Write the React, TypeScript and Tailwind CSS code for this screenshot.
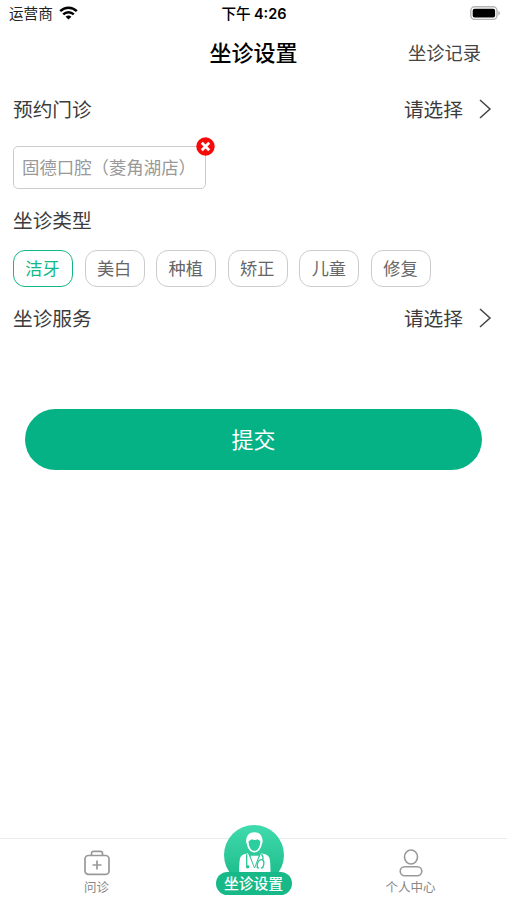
import React, { useState } from 'react';

const visitTypes = ['洁牙', '美白', '种植', '矫正', '儿童', '修复'];

const WifiIcon = () => (
  <svg width="19" height="14" viewBox="0 0 19 14" className="ml-[6px] -mt-px" fill="none" stroke="#000" strokeWidth="2.5">
    <path d="M1.2 5.2C6 .5 13 .5 17.8 5.2" />
    <path d="M4.2 8.3c3-2.900 7.600-2.900 10.600 0" />
    <path d="M9.5 13.600 6.600 10.700c1.700-1.600 4.100-1.600 5.800 0z" fill="#000" stroke="none" />
  </svg>
);

const BatteryIcon = () => (
  <svg width="31" height="14" viewBox="0 0 31 14" className="-mt-[2px]">
    <rect x="0.8" y="0.8" width="26.2" height="12.6" rx="3.8" fill="#fff" stroke="#b4b4b4" strokeWidth="1.4" />
    <rect x="2.7" y="2.7" width="22.4" height="8.8" rx="2" fill="#000" />
    <path d="M28.4 5v4.4c1.9-.6 1.9-3.8 0-4.4z" fill="#aaa" />
  </svg>
);

const ChevronIcon = () => (
  <svg width="13" height="20" viewBox="0 0 13 20" className="ml-4" fill="none" stroke="#444" strokeWidth="1.5">
    <path d="M1 1l10 9L1 19" />
  </svg>
);

const CloseIcon = () => (
  <svg width="19" height="19" viewBox="0 0 19 19">
    <circle cx="9.5" cy="9.5" r="9.2" fill="#f60a0a" />
    <path d="M5.800 5.800l7.400 7.400M13.200 5.800l-7.400 7.400" stroke="#fff" strokeWidth="2.8" />
  </svg>
);

const MedicalKitIcon = () => (
  <svg width="26" height="26" viewBox="0 0 26 26" fill="none" stroke="#999" strokeWidth="1.7">
    <rect x="1" y="5.5" width="24" height="18.800" rx="3.4" />
    <path d="M7.500 5.500V3.400C7.500 2.200 8.300 1.400 9.500 1.400h7c1.200 0 2 .8 2 2v2.100" />
    <path d="M13 10.500v9M8.500 15h9" />
  </svg>
);

const UserIcon = () => (
  <svg width="24" height="28" viewBox="0 0 24 28" fill="none" stroke="#999" strokeWidth="1.6">
    <ellipse cx="12" cy="8" rx="6.5" ry="7" />
    <rect x="1.2" y="17.8" width="21.6" height="9" rx="4.5" />
  </svg>
);

const DoctorIcon = () => (
  <svg width="60" height="60" viewBox="0 0 60 60">
    <path
      d="M22.200 15.500c0-5 3.200-8.300 8.200-8.300s8.100 3.300 8.100 8.300c.3.800.3 2.200-.5 3.100-1 5.400-3.700 9-7.600 9s-6.700-3.600-7.700-9c-.8-.9-.8-2.300-.5-3.100z"
      fill="#fff"
    />
    <path
      d="M24.600 15.900c1.300-.2 2.200-.8 2.900-1.700 2.400.9 4.600.9 6.200 0 .7.900 1.600 1.500 2.600 1.700-.1 5.700-2.200 9.900-5.900 9.900s-5.700-4.200-5.800-9.900z"
      fill="#2bce9e"
    />
    <path
      d="M24 28.300c-5 1-7.300 2.400-8 5.300-.7 3.200-.9 8.400-.9 14.400h31.400c0-6-.2-11.200-.9-14.400-.7-2.900-3.200-4.300-8.600-5.300l-6.500 14z"
      fill="#fff"
    />
    <path d="M26.200 30.800h8.600L30.600 44z" fill="#fff" />
    <g fill="none" stroke="#26c596">
      <path d="M25 28.600 30.500 43l5.800-14.400" strokeWidth="0.9" />
      <path d="M22.700 29.300v11.200" strokeWidth="1.3" />
      <path d="M37.300 29.300c1.900 2 2.100 3.900 1.200 5.500" strokeWidth="1.3" />
      <path d="M33.500 42.800c-1.100-3.900.9-8.200 3.800-8.200 3.100 0 3.400 4.600 1.200 8.200" strokeWidth="1.3" />
    </g>
    <circle cx="23.600" cy="41.700" r="1.800" fill="#26c596" />
    <path d="M32.900 42l1.800 1.400M39 42l-1.800 1.400" stroke="#26c596" strokeWidth="1.4" />
  </svg>
);

interface SelectRowProps {
  label: string;
}

const SelectRow: React.FC<SelectRowProps> = ({ label }) => (
  <div className="flex h-10 items-center justify-between pl-[13px] pr-[15px] text-[19.7px] text-[#3c3c3c]">
    <span>{label}</span>
    <button className="flex items-center">
      请选择
      <ChevronIcon />
    </button>
  </div>
);

const App: React.FC = () => {
  const [selectedType, setSelectedType] = useState('洁牙');
  const [clinic, setClinic] = useState('固德口腔（菱角湖店）');

  return (
    <div className="flex h-[900px] w-[507px] flex-col bg-white font-['Noto_Sans_CJK_SC',sans-serif] whitespace-nowrap">
      {/* Status bar */}
      <div className="grid h-[27px] grid-cols-3 items-center pl-[9px] pr-[6px] text-[14.6px] leading-none text-[#222]">
        <div className="flex items-center">
          运营商
          <WifiIcon />
        </div>
        <div className="pr-[2px] text-center font-medium text-black">
          下午 <span className="font-['Inter','Noto_Sans_CJK_SC',sans-serif] text-[14.5px] font-semibold">4:26</span>
        </div>
        <div className="flex justify-end">
          <BatteryIcon />
        </div>
      </div>

      {/* Header */}
      <header className="grid h-[51px] grid-cols-3 items-center px-[26px]">
        <span />
        <h1 className="pb-[2px] text-center text-[22px] font-medium text-black">坐诊设置</h1>
        <button className="text-right text-[18.3px] text-[#444]">坐诊记录</button>
      </header>

      <main className="flex-1">
        <div className="pt-[11px]">
          <SelectRow label="预约门诊" />
        </div>

        <div className="h-[71px] pl-[13px] pt-[17px]">
          {clinic && (
            <div className="relative flex h-[43px] w-[193px] items-center rounded-[5px] border border-[#ccc] pl-[8px] text-[17.4px] text-[#999]">
              {clinic}
              <button className="absolute -top-[10px] -right-[10px]" onClick={() => setClinic('')}>
                <CloseIcon />
              </button>
            </div>
          )}
        </div>

        <h2 className="flex h-10 items-center pl-[13px] text-[19.7px] text-[#3c3c3c]">坐诊类型</h2>
        <div className="flex gap-[11.6px] pl-[13px] pt-[10px]">
          {visitTypes.map((type) => (
            <button
              key={type}
              onClick={() => setSelectedType(type)}
              className={`h-[37px] w-[60px] rounded-[12px] border pr-px pb-px text-[17.2px] ${
                type === selectedType ? 'border-[#12b886] text-[#12b886]' : 'border-[#ccc] text-[#666]'
              }`}
            >
              {type}
            </button>
          ))}
        </div>

        <div className="pt-[11px]">
          <SelectRow label="坐诊服务" />
        </div>

        <div className="px-[25px] pt-[71px]">
          <button className="h-[61px] w-full rounded-full bg-[#04b286] pb-[2px] text-[22px] text-white">提交</button>
        </div>
      </main>

      {/* Tab bar */}
      <nav className="grid h-[62px] grid-cols-3 border-t border-[#ebebeb] px-[18px] text-[12.5px] leading-none text-[#888]">
        <button className="flex flex-col items-center pt-[11px]">
          <MedicalKitIcon />
          <span className="mt-[5px]">问诊</span>
        </button>
        <button className="-mt-[14px] flex flex-col items-center">
          <span className="h-[60px] w-[60px] rounded-full bg-linear-to-b from-[#40dbae] to-[#12b886]">
            <DoctorIcon />
          </span>
          <span className="relative -mt-[13px] flex h-[23px] w-[76px] items-center justify-center rounded-full bg-[#16b987] text-[14.8px] font-medium text-white">
            坐诊设置
          </span>
        </button>
        <button className="flex flex-col items-center pt-[10px]">
          <UserIcon />
          <span className="mt-[4px]">个人中心</span>
        </button>
      </nav>
    </div>
  );
};

export default App;
